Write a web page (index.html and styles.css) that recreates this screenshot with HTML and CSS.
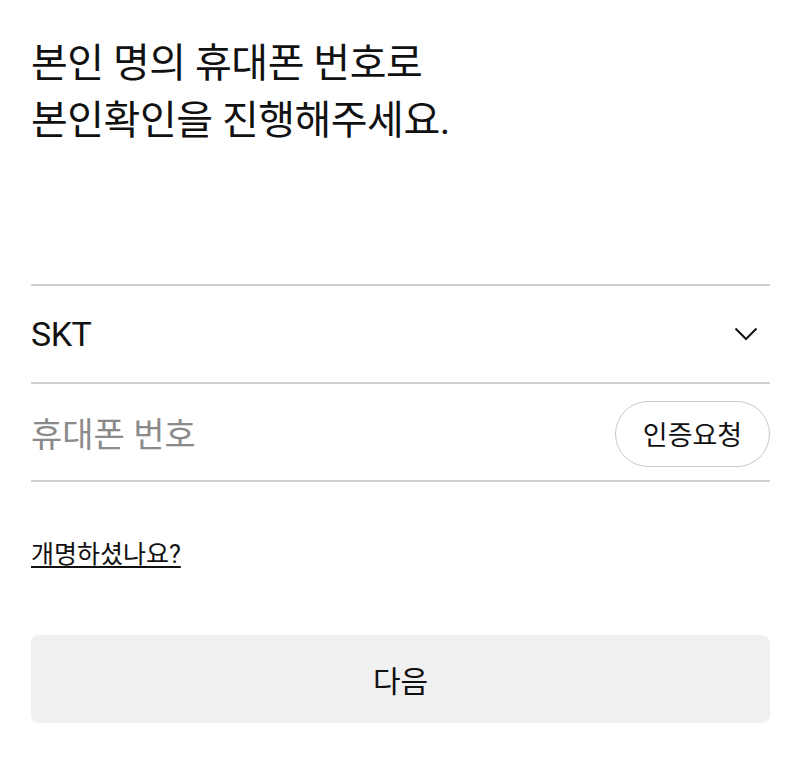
FILE: index.html
```html
<!DOCTYPE html>
<html lang="ko">
<head>
<meta charset="utf-8">
<link rel="stylesheet" href="styles.css">
</head>
<body>
<main class="page">
  <h1 class="title">본인 명의 휴대폰 번호로<br>본인확인을 진행해주세요.</h1>
  <div class="form">
    <div class="row select-row">
      <span class="carrier">SKT</span>
      <svg class="chevron" width="24" height="14" viewBox="0 0 24 14"><path d="M1.5 1.5 L12 12 L22.5 1.5" fill="none" stroke="#111" stroke-width="2"/></svg>
    </div>
    <div class="row phone-row">
      <span class="placeholder">휴대폰 번호</span>
      <button class="verify">인증요청</button>
    </div>
  </div>
  <a class="rename" href="#">개명하셨나요?</a>
  <button class="next">다음</button>
</main>
</body>
</html>
```
FILE: styles.css
```css
html, body {
  margin: 0;
  background: #fff;
}
body {
  font-family: Roboto, "Noto Sans CJK KR", sans-serif;
  color: #111;
}
.page {
  padding: 35px 30px 0 31px;
  display: flex;
  flex-direction: column;
}
.title {
  margin: 0;
  font-size: 40px;
  line-height: 57px;
  font-weight: 400;
  letter-spacing: -0.5px;
}
.form {
  margin-top: 135px;
  border-top: 2px solid #d2d2d2;
}
.row {
  display: flex;
  align-items: center;
  justify-content: space-between;
  height: 96px;
  border-bottom: 2px solid #d2d2d2;
}
.carrier {
  font-size: 34px;
  letter-spacing: -0.5px;
}
.chevron {
  margin-right: 12px;
}
.placeholder {
  font-size: 34px;
  color: #8a8a8a;
}
.verify {
  font-family: inherit;
  font-size: 27px;
  color: #111;
  background: #fff;
  border: 1.5px solid #c8c8c8;
  border-radius: 33px;
  height: 66px;
  width: 155px;
  padding: 0;
  margin-top: 3px;
}
.rename {
  align-self: flex-start;
  margin-top: 52px;
  font-size: 25px;
  color: #111;
  text-decoration: underline;
  text-decoration-thickness: 2px;
  text-underline-offset: 3px;
}
.next {
  margin-top: 65px;
  height: 88px;
  border: none;
  border-radius: 8px;
  background: #f0f0f0;
  font-family: inherit;
  font-size: 30px;
  color: #111;
}
```
